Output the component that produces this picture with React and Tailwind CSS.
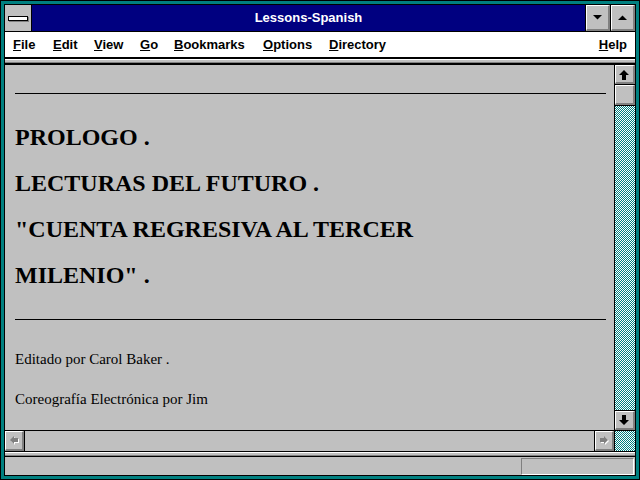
import React from "react";

// teal/white checker used by the scrollbar tracks
function Dither({ className = "", id }) {
  return (
    <div className={className}>
      <svg width="100%" height="100%" shapeRendering="crispEdges" className="block">
        <defs>
          <pattern id={id} width="2" height="2" patternUnits="userSpaceOnUse">
            <rect width="2" height="2" fill="#ffffff" />
            <rect x="0" y="0" width="1" height="1" fill="#008080" />
            <rect x="1" y="1" width="1" height="1" fill="#008080" />
          </pattern>
        </defs>
        <rect width="100%" height="100%" fill={`url(#${id})`} />
      </svg>
    </div>
  );
}

function Bevel({ className = "", children }) {
  return (
    <div
      className={`flex items-center justify-center bg-[#c0c0c0] border-t-[1px] border-l-[1px] border-t-white border-l-white border-b-[2px] border-r-[2px] border-b-[#808080] border-r-[#808080] ${className}`}
    >
      {children}
    </div>
  );
}

function Arrow({ dir, disabled }) {
  const pts = {
    up: "5,1 10,6 7,6 7,11 3,11 3,6 0,6",
    down: "3,0 7,0 7,5 10,5 5,10 0,5 3,5",
    left: "0,4 4,0 4,2 8,2 8,6 4,6 4,8",
    right: "8,4 4,0 4,2 0,2 0,6 4,6 4,8",
  }[dir];
  const big = dir === "up" || dir === "down";
  const size = big ? 11 : 9;
  return (
    <svg width={size} height={size} viewBox={`0 0 ${size} ${size}`}>
      {disabled ? (
        <>
          <polygon points={pts} fill="#ffffff" transform="translate(1,1)" />
          <polygon points={pts} fill="#808080" />
        </>
      ) : (
        <polygon points={pts} fill="#000000" />
      )}
    </svg>
  );
}

function MenuItem({ label, width }) {
  return (
    <span className={`${width} shrink-0`}>
      <u>{label[0]}</u>
      {label.slice(1)}
    </span>
  );
}

export default function App() {
  return (
    <div className="w-[640px] h-[480px] bg-black p-[1px]">
      <div className="w-full h-full bg-[#008080] p-[3px]">
        <div className="w-full h-full bg-black p-[1px]">
          <div className="w-full h-full flex flex-col bg-[#c0c0c0] font-['Liberation_Sans',Arial,sans-serif]">
            {/* title bar */}
            <div className="flex h-[26px] shrink-0">
              <div className="w-[26px] bg-[#c0c0c0] flex items-center justify-center">
                <div className="w-[20px] h-[5px] bg-white border border-black shadow-[1px_1px_0_#808080]" />
              </div>
              <div className="w-[1px] bg-black" />
              <div className="flex-1 bg-[#000080] flex items-center justify-center text-white font-bold text-[13px]">
                Lessons-Spanish
              </div>
              <div className="w-[1px] bg-black" />
              <Bevel className="w-[24px]">
                <svg width="9" height="5" viewBox="0 0 9 5">
                  <polygon points="0,0 9,0 4.5,4.5" fill="#000" />
                </svg>
              </Bevel>
              <div className="w-[1px] bg-black" />
              <Bevel className="w-[24px]">
                <svg width="9" height="5" viewBox="0 0 9 5">
                  <polygon points="0,5 9,5 4.5,0.5" fill="#000" />
                </svg>
              </Bevel>
            </div>
            <div className="h-[1px] bg-black shrink-0" />

            {/* menu bar */}
            <div className="h-[25px] shrink-0 bg-white flex items-center pl-[8px] pr-[8px] text-[13px] font-bold text-black">
              <MenuItem label="File" width="w-[40px]" />
              <MenuItem label="Edit" width="w-[41px]" />
              <MenuItem label="View" width="w-[46px]" />
              <MenuItem label="Go" width="w-[34px]" />
              <MenuItem label="Bookmarks" width="w-[89px]" />
              <MenuItem label="Options" width="w-[66px]" />
              <MenuItem label="Directory" width="w-[80px]" />
              <div className="flex-1" />
              <MenuItem label="Help" width="" />
            </div>

            {/* toolbar separator */}
            <div className="h-[2px] bg-black shrink-0" />
            <div className="h-[1px] bg-white shrink-0" />
            <div className="h-[2px] bg-[#c0c0c0] shrink-0" />
            <div className="h-[1px] bg-[#808080] shrink-0" />
            <div className="h-[2px] bg-black shrink-0" />

            {/* content + vertical scrollbar */}
            <div className="flex h-[365px] shrink-0">
              <div className="flex-1 bg-[#c0c0c0] pl-[10px] pr-[8px] pt-[28px] text-black font-['Liberation_Serif','Times_New_Roman',serif]">
                <div className="h-[1px] bg-black" />
                <div className="mt-[20px] text-[24px] font-bold leading-[46px]">
                  <div>PROLOGO .</div>
                  <div>LECTURAS DEL FUTURO .</div>
                  <div>"CUENTA REGRESIVA AL TERCER</div>
                  <div>MILENIO" .</div>
                </div>
                <div className="mt-[21px] h-[1px] bg-black" />
                <p className="mt-[29px] text-[15px] leading-[20px]">Editado por Carol Baker .</p>
                <p className="mt-[20px] text-[15px] leading-[20px]">Coreografía Electrónica por Jim</p>
              </div>
              <div className="w-[1px] bg-black" />
              <div className="w-[20px] flex flex-col">
                <Bevel className="h-[19px]">
                  <Arrow dir="up" />
                </Bevel>
                <div className="h-[1px] bg-black" />
                <Bevel className="h-[20px]" />
                <div className="h-[1px] bg-black" />
                <Dither id="vtrack" className="flex-1" />
                <div className="h-[1px] bg-black" />
                <Bevel className="h-[19px]">
                  <Arrow dir="down" />
                </Bevel>
              </div>
            </div>

            {/* horizontal scrollbar */}
            <div className="h-[1px] bg-black shrink-0" />
            <div className="flex h-[20px] shrink-0">
              <Bevel className="w-[19px]">
                <Arrow dir="left" disabled />
              </Bevel>
              <div className="w-[1px] bg-black" />
              <div className="flex-1 bg-[#c0c0c0]" />
              <div className="w-[1px] bg-black" />
              <Bevel className="w-[19px]">
                <Arrow dir="right" disabled />
              </Bevel>
              <div className="w-[1px] bg-black" />
              <Dither id="corner" className="w-[20px]" />
            </div>
            <div className="h-[1px] bg-black shrink-0" />

            {/* status separator */}
            <div className="h-[1px] bg-white shrink-0" />
            <div className="h-[2px] bg-[#c0c0c0] shrink-0" />
            <div className="h-[1px] bg-[#808080] shrink-0" />
            <div className="h-[1px] bg-black shrink-0" />

            {/* status bar */}
            <div className="flex-1 flex justify-end items-start bg-[#c0c0c0] pt-[1px] pr-[1px]">
              <div className="w-[113px] h-[17px] border-t border-l border-t-[#808080] border-l-[#808080] border-b border-r border-b-white border-r-white" />
            </div>
          </div>
        </div>
      </div>
    </div>
  );
}
